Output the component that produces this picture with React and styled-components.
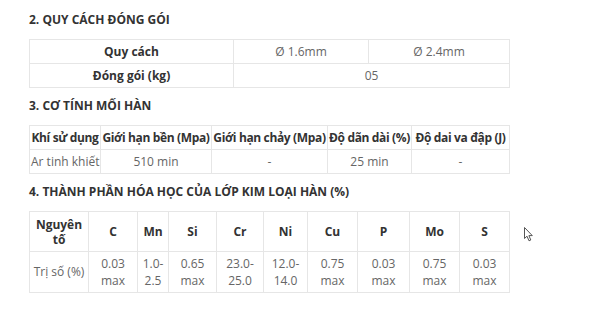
import React from "react";
import styled, { createGlobalStyle } from "styled-components";

const Global = createGlobalStyle`
  html, body { margin: 0; padding: 0; background: #fff; }
  body { font-family: "Open Sans", "Liberation Sans", sans-serif; color: #555; }
`;

const Page = styled.div`
  position: relative;
  width: 600px;
  height: 314px;
  padding: 12px 0 0 29px;
  box-sizing: border-box;
  display: flex;
  flex-direction: column;
  align-items: flex-start;
`;

const Heading = styled.h3`
  margin: ${(p) => (p.$first ? "0" : "10px")} 0 11px 0;
  font-size: 12px;
  line-height: 16px;
  font-weight: 700;
  color: #333;
  text-transform: uppercase;
`;

const Table = styled.table`
  border-collapse: collapse;
  table-layout: fixed;
  width: 480px;
  font-size: 12px;
`;

const Cell = styled.td`
  border: 1px solid #e6e6e6;
  padding: 0 ${(p) => (p.$tight ? 0 : 1)}px;
  height: ${(p) => p.$h || 23}px;
  line-height: ${(p) => p.$lh || 16}px;
  text-align: ${(p) => p.$align || "center"};
  font-weight: ${(p) => (p.$bold ? 700 : 400)};
  letter-spacing: ${(p) => (p.$tight ? "-0.35px" : "normal")};
  color: ${(p) => (p.$bold ? "#333" : "#666")};
  white-space: ${(p) => (p.$wrap ? "normal" : "nowrap")};
  vertical-align: middle;
  overflow: hidden;
`;

const Cursor = styled.svg`
  position: absolute;
  left: 524px;
  top: 227px;
`;

const t3cols = [59, 49, 31, 48, 47, 44, 50, 52, 50, 50];
const elements = ["C", "Mn", "Si", "Cr", "Ni", "Cu", "P", "Mo", "S"];
const values = [
  ["0.03", "max"],
  ["1.0-", "2.5"],
  ["0.65", "max"],
  ["23.0-", "25.0"],
  ["12.0-", "14.0"],
  ["0.75", "max"],
  ["0.03", "max"],
  ["0.75", "max"],
  ["0.03", "max"],
];

export default function App() {
  return (
    <>
      <Global />
      <Page>
        <Heading $first>2. Quy cách đóng gói</Heading>
        <Table>
          <colgroup>
            <col style={{ width: 204 }} />
            <col style={{ width: 135 }} />
            <col style={{ width: 141 }} />
          </colgroup>
          <tbody>
            <tr>
              <Cell $bold>Quy cách</Cell>
              <Cell>Ø 1.6mm</Cell>
              <Cell>Ø 2.4mm</Cell>
            </tr>
            <tr>
              <Cell $bold>Đóng gói (kg)</Cell>
              <Cell colSpan={2}>05</Cell>
            </tr>
          </tbody>
        </Table>

        <Heading>3. Cơ tính mối hàn</Heading>
        <Table>
          <colgroup>
            <col style={{ width: 71 }} />
            <col style={{ width: 111 }} />
            <col style={{ width: 116 }} />
            <col style={{ width: 84 }} />
            <col style={{ width: 98 }} />
          </colgroup>
          <tbody>
            <tr>
              <Cell $bold $tight>Khí sử dụng</Cell>
              <Cell $bold $tight>Giới hạn bền (Mpa)</Cell>
              <Cell $bold $tight>Giới hạn chảy (Mpa)</Cell>
              <Cell $bold $tight>Độ dãn dài (%)</Cell>
              <Cell $bold $tight>Độ dai va đập (J)</Cell>
            </tr>
            <tr>
              <Cell $align="left">Ar tinh khiết</Cell>
              <Cell>510 min</Cell>
              <Cell>-</Cell>
              <Cell>25 min</Cell>
              <Cell>-</Cell>
            </tr>
          </tbody>
        </Table>

        <Heading>4. Thành phần hóa học của lớp kim loại hàn (%)</Heading>
        <Table>
          <colgroup>
            {t3cols.map((w, i) => (
              <col key={i} style={{ width: w }} />
            ))}
          </colgroup>
          <tbody>
            <tr>
              <Cell $bold $wrap $h={39} $lh={15}>
                Nguyên tố
              </Cell>
              {elements.map((e) => (
                <Cell key={e} $bold $h={39}>
                  {e}
                </Cell>
              ))}
            </tr>
            <tr>
              <Cell $h={40}>Trị số (%)</Cell>
              {values.map((v, i) => (
                <Cell key={i} $h={40} $lh={17} $wrap>
                  {v[0]}
                  <br />
                  {v[1]}
                </Cell>
              ))}
            </tr>
          </tbody>
        </Table>

        <Cursor width="10" height="15" viewBox="0 0 10 15">
          <path
            d="M0.5 0.5 L0.5 11.5 L3 9.2 L5 13.8 L6.8 13 L4.9 8.6 L8.3 8.6 Z"
            fill="#fff"
            stroke="#555"
            strokeWidth="1"
            strokeLinejoin="round"
          />
        </Cursor>
      </Page>
    </>
  );
}
